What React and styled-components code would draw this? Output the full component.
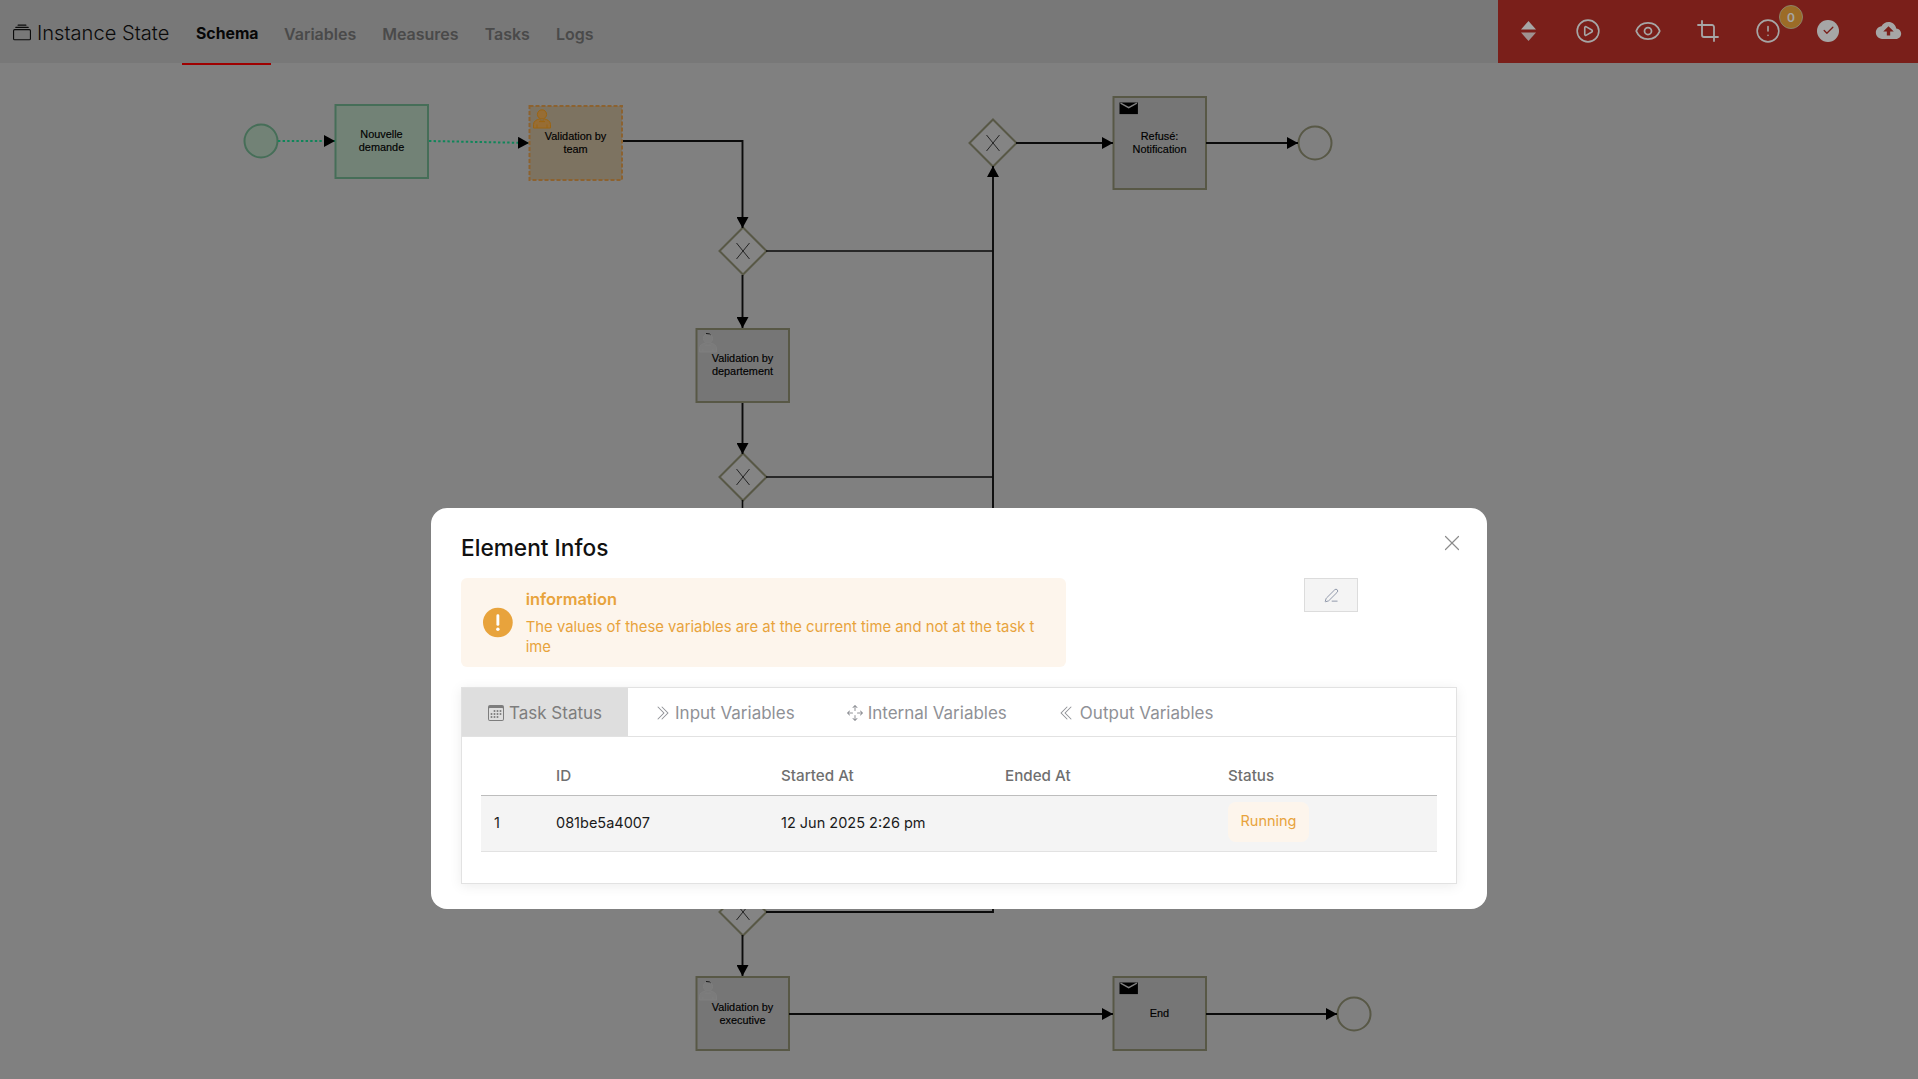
import styled, { createGlobalStyle } from "styled-components";
import { BsCalendar3, BsChevronDoubleLeft, BsChevronDoubleRight, BsArrowsMove, BsCollection } from "react-icons/bs";
import { IoMdCloudUpload } from "react-icons/io";
import { Check, CirclePlay, Crop, Eye, CircleAlert, PenLine, X } from "lucide-react";

const GlobalStyle = createGlobalStyle`
  html, body {
    margin: 0;
    height: 100%;
    overflow: hidden;
  }
  body {
    font-family: Inter, "Liberation Sans", sans-serif;
  }
  * {
    box-sizing: border-box;
  }
`;

const Page = styled.div`
  position: relative;
  width: 100vw;
  height: 100vh;
  background: #c5c5c5;
  overflow: hidden;
`;

const Header = styled.header`
  display: flex;
  align-items: flex-start;
  height: 63px;
  background: #b9b9b9;
`;

const Brand = styled.div`
  display: flex;
  align-items: center;
  gap: 6px;
  width: 182px;
  height: 63px;
  padding: 3px 0 0 13px;
  font-size: 20.1px;
  font-weight: 300;
  color: #111;
`;

const Nav = styled.nav`
  display: flex;
`;

const NavTab = styled.a`
  display: flex;
  align-items: center;
  height: 65px;
  padding: ${(p) => (p.$active ? "4px 12.5px 0 14px" : "4px 13px 0")};
  font-size: ${(p) => (p.$active ? "15.8px" : "16px")};
  font-weight: ${(p) => (p.$active ? 700 : 600)};
  color: ${(p) => (p.$active ? "#0c0c0c" : "#727272")};
  border-bottom: 2px solid ${(p) => (p.$active ? "#f50000" : "transparent")};
`;

const ActionBar = styled.div`
  display: flex;
  flex: 0 0 418px;
  margin-left: auto;
  height: 63px;
  background: #bc3128;
`;

const ActionCell = styled.div`
  position: relative;
  display: flex;
  flex: 0 0 60px;
  align-items: center;
  justify-content: center;
  padding-bottom: 2px;
  color: #fff;
`;

const Badge = styled.span`
  position: absolute;
  top: 5px;
  left: 41px;
  display: flex;
  align-items: center;
  justify-content: center;
  width: 24px;
  height: 24px;
  border-radius: 50%;
  border: 1px solid #d8c8a0;
  background: #f0a63d;
  font-size: 12px;
  font-weight: 600;
`;

const CheckDisc = styled.span`
  display: flex;
  align-items: center;
  justify-content: center;
  width: 22px;
  height: 22px;
  border-radius: 50%;
  background: #fff;
  color: #bc3128;
`;

const Canvas = styled.svg`
  display: block;
`;

const NodeLabel = styled.text`
  font-family: "Liberation Sans", Arial, sans-serif;
  font-size: 10.9px;
  fill: #000;
  stroke: #000;
  stroke-width: 0.15px;
  text-anchor: middle;
`;

const Overlay = styled.div`
  position: absolute;
  inset: 0;
  display: flex;
  justify-content: center;
  align-items: flex-start;
  padding-top: 508px;
  background: rgba(0, 0, 0, 0.35);
`;

const Modal = styled.div`
  position: relative;
  width: 1056px;
  height: 401px;
  padding: 30px 30px 0;
  border-radius: 16px;
  background: #fff;
`;

const ModalTitle = styled.h2`
  margin: 0;
  font-size: 22.7px;
  line-height: 20px;
  font-weight: 500;
  color: #111;
`;

const CloseButton = styled.span`
  position: absolute;
  top: 22px;
  right: 22px;
  color: #8c8c8c;
  display: flex;
`;

const InfoRow = styled.div`
  display: flex;
  justify-content: space-between;
  align-items: flex-start;
  margin-top: 20px;
  padding-right: 99px;
`;

const Alert = styled.div`
  display: flex;
  align-items: center;
  gap: 13px;
  width: 605px;
  height: 89px;
  padding: 0 28px 0 22px;
  border-radius: 6px;
  background: #fdf5ec;
  color: #e8a33c;
`;

const AlertTitle = styled.div`
  font-size: 16.4px;
  line-height: 20px;
  font-weight: 600;
  margin: 1px 0 8px;
`;

const AlertText = styled.div`
  font-size: 14.85px;
  line-height: 20px;
  word-break: break-all;
`;

const EditButton = styled.span`
  display: flex;
  align-items: center;
  justify-content: center;
  width: 54px;
  height: 34px;
  border: 1px solid #dcdcdc;
  background: #f4f4f4;
  color: #8a92a5;
`;

const Card = styled.div`
  width: 996px;
  height: 197px;
  margin-top: 20px;
  border: 1px solid #e2e2e2;
  box-shadow: 0 2px 12px rgba(0, 0, 0, 0.08);
`;

const TabRow = styled.div`
  display: flex;
  height: 49px;
  border-bottom: 1px solid #e2e2e2;
`;

const Tab = styled.div`
  display: flex;
  align-items: center;
  gap: 5px;
  padding: 1px 26px 0;
  font-size: 17px;
  color: ${(p) => (p.$active ? "#7d7d7d" : "#8f9196")};
  background: ${(p) => (p.$active ? "#dedede" : "transparent")};
`;

const TablePane = styled.div`
  padding: 0 19px;
`;

const TableGrid = styled.div`
  display: grid;
  grid-template-columns: 75px 225px 224px 223px 1fr;
  align-items: center;
`;

const TableHead = styled(TableGrid)`
  height: 59px;
  padding-top: 18px;
  border-bottom: 1px solid #bdbdbd;
  font-size: 15.2px;
  font-weight: 500;
  color: #6f6f6f;
`;

const TableRow = styled(TableGrid)`
  height: 56px;
  padding-bottom: 2px;
  border-bottom: 1px solid #e2e2e2;
  background: #f4f4f4;
  font-size: 14.5px;
  color: #1a1a1a;
`;

const RowIndex = styled.span`
  padding-left: 13px;
`;

const StatusTag = styled.span`
  display: inline-flex;
  align-items: center;
  justify-content: center;
  width: 81px;
  height: 40px;
  margin-bottom: 2px;
  padding-bottom: 2px;
  border-radius: 8px;
  background: #fdf5ec;
  color: #e8a33c;
`;

const Y = 63;
const LINE = "#111";

const tasks = [
  { x: 335, y: 104, h: 75, lines: ["Nouvelle", "demande"], base: 138, tone: "done" },
  { x: 529, y: 105, h: 76, lines: ["Validation by", "team"], base: 139.8, tone: "active", icon: "person" },
  { x: 696, y: 328, h: 75, lines: ["Validation by", "departement"], base: 361.7, icon: "ghost" },
  { x: 1113, y: 96, h: 94, lines: ["Refusé:", "Notification"], base: 140, icon: "mail" },
  { x: 696, y: 976, h: 75, lines: ["Validation by", "executive"], base: 1011, icon: "ghost" },
  { x: 1113, y: 976, h: 75, lines: ["End"], base: 1017, icon: "mail" },
];

const gateways = [
  [993, 143],
  [743, 251],
  [743, 477],
  [743, 912],
];

const flows = [
  { d: "M278 141H335", dotted: true },
  { d: "M429 141L529 143", dotted: true },
  { d: "M623 141H742.5V228" },
  { d: "M742.5 275V328" },
  { d: "M742.5 403V454" },
  { d: "M742.5 500V700", plain: true },
  { d: "M766 251H993", plain: true },
  { d: "M766 477H993", plain: true },
  { d: "M766 912H993V166" },
  { d: "M1016 143H1113" },
  { d: "M1206 143H1298" },
  { d: "M742.5 935V976" },
  { d: "M789 1014H1113" },
  { d: "M1206 1014H1337" },
];

const circles = [
  { cx: 261, cy: 141, done: true },
  { cx: 1315, cy: 143 },
  { cx: 1354, cy: 1014 },
];

function PersonMark({ x, y, fill, shade }) {
  return (
    <g transform={`translate(${x} ${y})`} fill={fill} stroke={shade} strokeWidth="1">
      <path d="M.5 19v-3.5C.5 12 4 10.4 6.4 10L9 12.4 11.6 10c2.4.4 5.9 2 5.9 5.5V19z" />
      <circle cx="9" cy="5.4" r="4.6" />
      <path d="M4 19v-3.5M14 19v-3.5M6 12.6h6" fill="none" />
    </g>
  );
}

function MailMark({ x, y }) {
  return (
    <g transform={`translate(${x} ${y})`}>
      <rect width="18.4" height="11.6" fill="#000" />
      <path d="M1 .6L9.2 5.2 17.4 .6" fill="none" stroke="#c5c5c5" strokeWidth="1.4" />
    </g>
  );
}

function TaskNode({ task }) {
  const { x, y, h, lines, base, tone, icon } = task;
  const stroke = tone === "done" ? "#6ca987" : tone === "active" ? "#d7974a" : "#87876c";
  const fill = tone === "done" ? "#afc8b6" : tone === "active" ? "#c0b195" : "#b6b6b6";
  return (
    <g>
      <rect
        x={x + 0.5}
        y={y + 1}
        width="92.5"
        height={h - 2}
        fill={fill}
        stroke={stroke}
        strokeWidth="2"
        strokeDasharray={tone === "active" ? "4 2" : undefined}
      />
      {icon === "person" && <PersonMark x={x + 4} y={y + 4} fill="#e8a850" shade="#ef9a1c" />}
      {icon === "ghost" && (
        <>
          <PersonMark x={x + 3} y={y + 5} fill="#bdbdbd" shade="#c2c2c2" />
          <path d={`M${x + 10} ${y + 5.5}l3.5 .4 1 .8`} fill="none" stroke="#222" strokeWidth="1" />
        </>
      )}
      {icon === "mail" && <MailMark x={x + 6.5} y={y + 6.5} />}
      {lines.map((line, i) => (
        <NodeLabel key={line} x={x + 46.5} y={base + i * 13}>
          {line}
        </NodeLabel>
      ))}
    </g>
  );
}

function Diagram() {
  return (
    <Canvas width="1918" height={1079 - Y} viewBox={`0 ${Y} 1918 ${1079 - Y}`}>
      <defs>
        <marker id="tip" markerUnits="userSpaceOnUse" markerWidth="11" markerHeight="12" refX="11" refY="6" orient="auto">
          <path d="M0 0L11 6 0 12z" fill="#000" />
        </marker>
      </defs>
      {circles.map((c) => (
        <circle
          key={c.cx}
          cx={c.cx}
          cy={c.cy}
          r="16.5"
          fill={c.done ? "#afc8b6" : "#c5c5c5"}
          stroke={c.done ? "#6ca987" : "#87876c"}
          strokeWidth="2"
        />
      ))}
      {tasks.map((t) => (
        <TaskNode key={t.x + "-" + t.y} task={t} />
      ))}
      {gateways.map(([cx, cy]) => (
        <g key={cx + "-" + cy}>
          <path
            d={`M${cx} ${cy - 23.5}L${cx + 23.5} ${cy} ${cx} ${cy + 23.5} ${cx - 23.5} ${cy}z`}
            fill="#cbcbcb"
            stroke="#87876c"
            strokeWidth="2"
          />
          <path
            d={`M${cx - 6.5} ${cy - 8}L${cx + 6.5} ${cy + 8}M${cx + 6.5} ${cy - 8}L${cx - 6.5} ${cy + 8}`}
            stroke="#111"
            strokeWidth="0.8"
          />
        </g>
      ))}
      {flows.map((f) => (
        <path
          key={f.d}
          d={f.d}
          fill="none"
          stroke={f.dotted ? "#19cd8a" : LINE}
          strokeWidth={f.dotted ? 2 : f.plain ? 1.6 : 1.9}
          strokeDasharray={f.dotted ? "2.4 2.2" : undefined}
          markerEnd={f.plain ? undefined : "url(#tip)"}
        />
      ))}
    </Canvas>
  );
}

function SortMark() {
  return (
    <svg width="15" height="20" viewBox="0 0 15 20" fill="currentColor">
      <path d="M7.5 0L15 8.4H0z" />
      <path d="M0 11.6h15L7.5 20z" opacity="0.85" />
    </svg>
  );
}

function AlertMark() {
  return (
    <svg width="31" height="31" viewBox="0 0 31 31">
      <circle cx="15.5" cy="15.5" r="15.5" fill="#e8a33c" />
      <rect x="14" y="7" width="3" height="12" rx="1.4" fill="#fff" />
      <circle cx="15.5" cy="22.6" r="1.8" fill="#fff" />
    </svg>
  );
}

const navItems = ["Schema", "Variables", "Measures", "Tasks", "Logs"];

export default function App() {
  return (
    <Page>
      <GlobalStyle />
      <Header>
        <Brand>
          <BsCollection size={18} />
          Instance State
        </Brand>
        <Nav>
          {navItems.map((item, i) => (
            <NavTab key={item} $active={i === 0}>
              {item}
            </NavTab>
          ))}
        </Nav>
        <ActionBar>
          <ActionCell>
            <SortMark />
          </ActionCell>
          <ActionCell>
            <CirclePlay size={26} strokeWidth={1.5} />
          </ActionCell>
          <ActionCell>
            <Eye size={28} strokeWidth={1.5} />
          </ActionCell>
          <ActionCell>
            <Crop size={24} strokeWidth={1.8} />
          </ActionCell>
          <ActionCell>
            <CircleAlert size={26} strokeWidth={1.5} />
            <Badge>0</Badge>
          </ActionCell>
          <ActionCell>
            <CheckDisc>
              <Check size={13} strokeWidth={2.4} />
            </CheckDisc>
          </ActionCell>
          <ActionCell>
            <IoMdCloudUpload size={27} />
          </ActionCell>
        </ActionBar>
      </Header>
      <Diagram />
      <Overlay>
        <Modal>
          <ModalTitle>Element Infos</ModalTitle>
          <CloseButton>
            <X size={26} strokeWidth={1.1} />
          </CloseButton>
          <InfoRow>
            <Alert>
              <AlertMark />
              <div>
                <AlertTitle>information</AlertTitle>
                <AlertText>The values of these variables are at the current time and not at the task time</AlertText>
              </div>
            </Alert>
            <EditButton>
              <PenLine size={15} strokeWidth={1.5} />
            </EditButton>
          </InfoRow>
          <Card>
            <TabRow>
              <Tab $active>
                <BsCalendar3 size={16} />
                Task Status
              </Tab>
              <Tab>
                <BsChevronDoubleRight size={16} />
                Input Variables
              </Tab>
              <Tab>
                <BsArrowsMove size={16} />
                Internal Variables
              </Tab>
              <Tab>
                <BsChevronDoubleLeft size={16} />
                Output Variables
              </Tab>
            </TabRow>
            <TablePane>
              <TableHead>
                <span />
                <span>ID</span>
                <span>Started At</span>
                <span>Ended At</span>
                <span>Status</span>
              </TableHead>
              <TableRow>
                <RowIndex>1</RowIndex>
                <span>081be5a4007</span>
                <span>12 Jun 2025 2:26 pm</span>
                <span />
                <span>
                  <StatusTag>Running</StatusTag>
                </span>
              </TableRow>
            </TablePane>
          </Card>
        </Modal>
      </Overlay>
    </Page>
  );
}
